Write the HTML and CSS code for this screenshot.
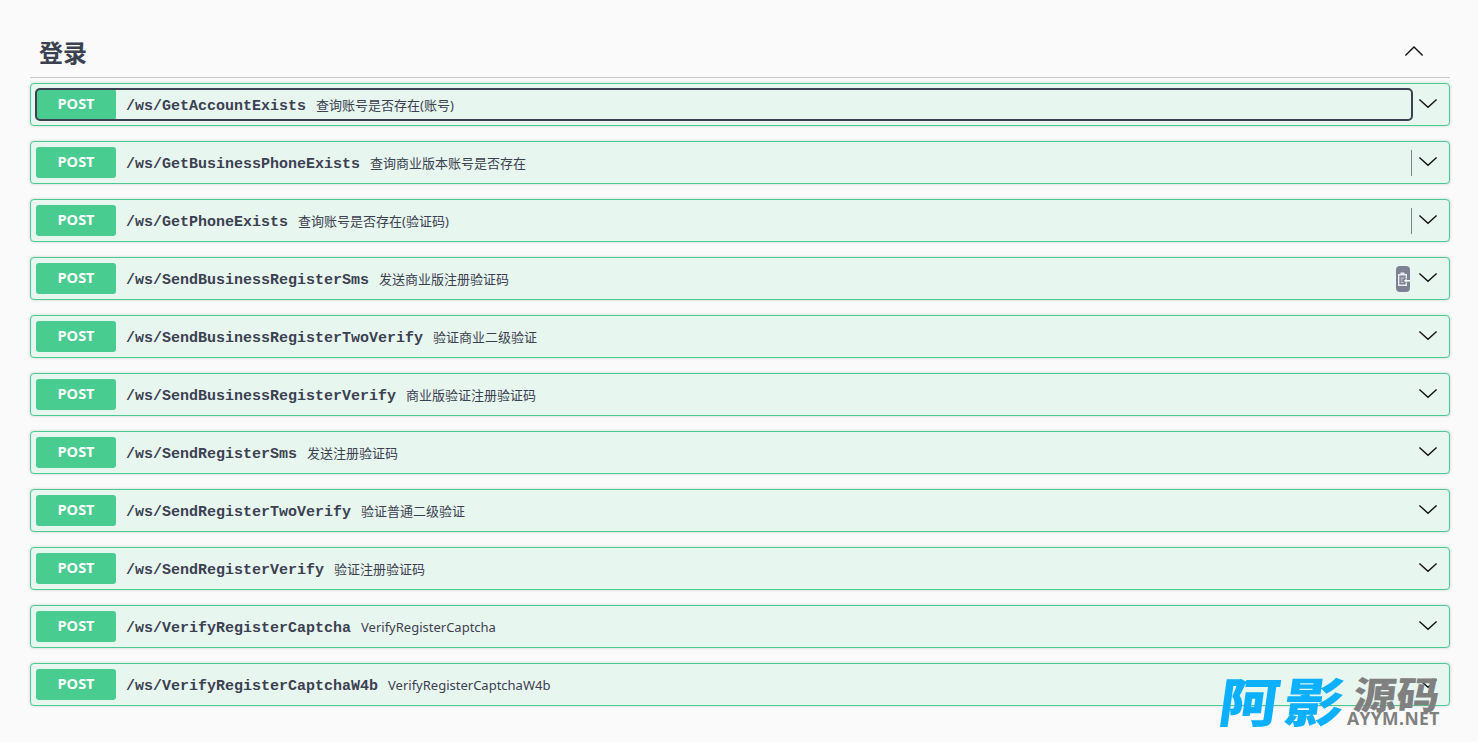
FILE: index.html
```html
<!DOCTYPE html>
<html lang="zh">
<head>
<meta charset="utf-8">
<title>登录</title>
<link rel="stylesheet" href="styles.css">
</head>
<body>
<svg class="sprite" width="0" height="0" aria-hidden="true">
  <symbol id="chev-down" viewBox="0 0 20 20"><path d="M1.4 6.4 10 14.2 18.6 6.4" fill="none" stroke="#111" stroke-width="1.4"/></symbol>
  <symbol id="chev-up" viewBox="0 0 20 20"><path d="M1.4 14.6 10 6 18.6 14.6" fill="none" stroke="#111" stroke-width="1.4"/></symbol>
</svg>
<main class="page">
  <header class="tag">
    <h3 class="tag-title">登录</h3>
    <svg class="arrow arrow-up"><use href="#chev-up"/></svg>
  </header>
  <section class="ops">
    <div class="op">
      <div class="summary focused"><span class="method">POST</span><span class="path">/ws/GetAccountExists</span><span class="desc">查询账号是否存在(账号)</span></div>
      <svg class="arrow"><use href="#chev-down"/></svg>
    </div>
    <div class="op">
      <div class="summary"><span class="method">POST</span><span class="path">/ws/GetBusinessPhoneExists</span><span class="desc">查询商业版本账号是否存在</span></div>
      <span class="divider"></span>
      <svg class="arrow"><use href="#chev-down"/></svg>
    </div>
    <div class="op">
      <div class="summary"><span class="method">POST</span><span class="path">/ws/GetPhoneExists</span><span class="desc">查询账号是否存在(验证码)</span></div>
      <span class="divider"></span>
      <svg class="arrow"><use href="#chev-down"/></svg>
    </div>
    <div class="op">
      <div class="summary"><span class="method">POST</span><span class="path">/ws/SendBusinessRegisterSms</span><span class="desc">发送商业版注册验证码</span></div>
      <span class="copy">
        <svg width="13" height="16" viewBox="0 0 13 16">
          <path d="M1 3h2.5V1.5h4V3H10v4.5H8.6V4.4H2.4v9.2h6.2V12H10v3H1z" fill="#fff" fill-opacity=".85"/>
          <path d="M3.6 6.5h3.6v1H3.6zM3.6 8.6h2v1h-2zM3.6 10.7h3v1h-3z" fill="#fff" fill-opacity=".7"/>
          <path d="M13 8.9H9.6V7.4L7 9.7l2.6 2.3v-1.5H13z" fill="#fff"/>
        </svg>
      </span>
      <svg class="arrow"><use href="#chev-down"/></svg>
    </div>
    <div class="op">
      <div class="summary"><span class="method">POST</span><span class="path">/ws/SendBusinessRegisterTwoVerify</span><span class="desc">验证商业二级验证</span></div>
      <svg class="arrow"><use href="#chev-down"/></svg>
    </div>
    <div class="op">
      <div class="summary"><span class="method">POST</span><span class="path">/ws/SendBusinessRegisterVerify</span><span class="desc">商业版验证注册验证码</span></div>
      <svg class="arrow"><use href="#chev-down"/></svg>
    </div>
    <div class="op">
      <div class="summary"><span class="method">POST</span><span class="path">/ws/SendRegisterSms</span><span class="desc">发送注册验证码</span></div>
      <svg class="arrow"><use href="#chev-down"/></svg>
    </div>
    <div class="op">
      <div class="summary"><span class="method">POST</span><span class="path">/ws/SendRegisterTwoVerify</span><span class="desc">验证普通二级验证</span></div>
      <svg class="arrow"><use href="#chev-down"/></svg>
    </div>
    <div class="op">
      <div class="summary"><span class="method">POST</span><span class="path">/ws/SendRegisterVerify</span><span class="desc">验证注册验证码</span></div>
      <svg class="arrow"><use href="#chev-down"/></svg>
    </div>
    <div class="op">
      <div class="summary"><span class="method">POST</span><span class="path">/ws/VerifyRegisterCaptcha</span><span class="desc">VerifyRegisterCaptcha</span></div>
      <svg class="arrow"><use href="#chev-down"/></svg>
    </div>
    <div class="op">
      <div class="summary"><span class="method">POST</span><span class="path">/ws/VerifyRegisterCaptchaW4b</span><span class="desc">VerifyRegisterCaptchaW4b</span></div>
      <svg class="arrow"><use href="#chev-down"/></svg>
    </div>
  </section>
</main>
<div class="mark">
  <span class="mark-blue">阿影</span>
  <span class="mark-side"><span class="mark-gray">源码</span><span class="mark-net">AYYM.NET</span></span>
</div>
</body>
</html>
```

FILE: styles.css
```css
* { box-sizing: border-box; }
html, body { margin: 0; height: 100%; overflow: hidden; }
body {
  background: #fafafa;
  color: #3b4151;
  font-family: "Noto Sans CJK SC", "Noto Sans", sans-serif;
}
.sprite { position: absolute; }
.page { padding: 24px 28px 0 30px; }
.tag {
  height: 54px;
  display: flex;
  align-items: center;
  justify-content: space-between;
  padding: 2px 26px 0 9px;
  border-bottom: 1px solid #c8c8c8;
  margin-bottom: 5px;
}
.tag-title {
  margin: 0;
  font-size: 24px;
  line-height: 30px;
  font-weight: 700;
  color: #3b4151;
}
.arrow { width: 20px; height: 20px; flex: none; margin-top: -2px; }
.arrow-up { margin-top: -2px; }
.ops { display: flex; flex-direction: column; gap: 15px; }
.op {
  height: 43px;
  display: flex;
  align-items: center;
  padding: 0 11px 2px 5px;
  background: #e8f6f0;
  border: 1px solid #49cc90;
  border-radius: 4px;
  box-shadow: 0 0 3px rgba(0, 0, 0, .19);
}
.summary {
  flex: 1;
  min-width: 0;
  height: 31px;
  display: flex;
  align-items: center;
  margin-top: 2px;
}
.focused {
  outline: 2px solid #3b4151;
  outline-offset: -1px;
  border-radius: 4px;
  margin-right: 6px;
}
.method {
  width: 80px;
  height: 31px;
  flex: none;
  display: flex;
  align-items: center;
  justify-content: center;
  background: #49cc90;
  border-radius: 3px;
  color: #fff;
  font-family: "Open Sans", "Noto Sans", sans-serif;
  font-size: 14.5px;
  font-weight: 700;
  padding-bottom: 2px;
}
.path {
  margin-left: 10px;
  padding-top: 4px;
  font-family: "Liberation Mono", "DejaVu Sans Mono", monospace;
  font-size: 15px;
  font-weight: 700;
  color: #3b4151;
}
.desc {
  margin-left: 10px;
  font-size: 13px;
  color: #3b4151;
  font-family: "Noto Sans", "Noto Sans CJK SC", sans-serif;
}
.divider {
  width: 1px;
  height: 26px;
  margin-top: 2px;
  margin-right: 6px;
  background: #7d8293;
  flex: none;
}
.copy {
  width: 14px;
  height: 26px;
  margin-right: 8px;
  margin-left: 3px;
  flex: none;
  display: flex;
  align-items: center;
  justify-content: center;
  background: #7d8293;
  border-radius: 4px;
  margin-top: 2px;
}
.mark {
  position: absolute;
  left: 1220px;
  top: 668px;
  display: flex;
  align-items: flex-start;
  gap: 0;
  pointer-events: none;
}
.mark-blue {
  display: block;
  color: #0cb0ff;
  font-size: 60px;
  line-height: 62px;
  font-weight: 900;
  letter-spacing: 5px;
  transform: skewX(-8deg) scaleY(.88);
}
.mark-side { display: flex; flex-direction: column; align-items: flex-end; margin-top: 6px; margin-left: -3px; }
.mark-gray {
  color: #808080;
  font-size: 43px;
  line-height: 37px;
  font-weight: 900;
  transform: skewX(-6deg) scaleY(.88);
}
.mark-net {
  color: #808080;
  font-family: "Open Sans", sans-serif;
  font-size: 17.5px;
  line-height: 14px;
  font-weight: 700;
  letter-spacing: .4px;
}
```
